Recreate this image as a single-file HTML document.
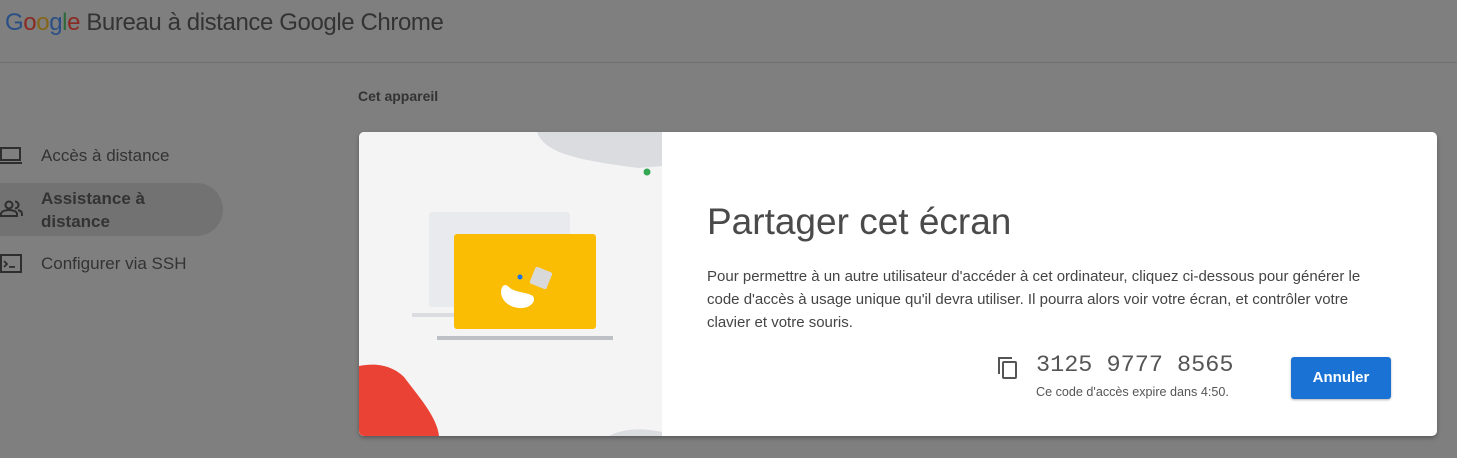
<!DOCTYPE html>
<html><head><meta charset="utf-8"><style>
*{margin:0;padding:0;box-sizing:border-box}
body{width:1457px;height:458px;background:#7f7f7f;font-family:"Liberation Sans",Arial,sans-serif;position:relative;overflow:hidden;color:#2e2e2e}
.abs{position:absolute}
</style></head><body>
<div class="abs" style="left:5px;top:9px;font-size:24px;letter-spacing:-0.4px;white-space:nowrap">
<span style="color:#2a4f86">G</span><span style="color:#8a2b22">o</span><span style="color:#84661a">o</span><span style="color:#2a4f86">g</span><span style="color:#2d6a3a">l</span><span style="color:#8a2b22">e</span> <span style="color:#333">Bureau à distance Google Chrome</span></div>
<div class="abs" style="left:0;top:62px;width:1457px;height:1px;background:#6f6f6f"></div>
<div class="abs" style="left:358px;top:88px;font-size:14px;font-weight:bold;color:#333">Cet appareil</div>
<div class="abs" style="left:0;top:183px;width:223px;height:53px;background:#727272;border-radius:0 27px 27px 0"></div>
<svg class="abs" style="left:0;top:146px" width="24" height="20" viewBox="0 0 24 20"><rect x="1" y="2" width="19" height="12" fill="none" stroke="#2e2e2e" stroke-width="2"/><rect x="0" y="16" width="22" height="2" fill="#2e2e2e"/></svg>
<div class="abs" style="left:41px;top:146px;font-size:17px;color:#333">Accès à distance</div>
<svg class="abs" style="left:0;top:199px" width="24" height="20" viewBox="0 0 24 20"><circle cx="9" cy="6" r="3.5" fill="none" stroke="#2e2e2e" stroke-width="2"/><path d="M1 17v-2c0-3 5-4 8-4s8 1 8 4v2z" fill="none" stroke="#2e2e2e" stroke-width="2"/><path d="M15 2.5a3.5 3.5 0 0 1 0 7M18 11c2 .5 4 1.5 4 4v2" fill="none" stroke="#2e2e2e" stroke-width="2"/></svg>
<div class="abs" style="left:41px;top:187px;font-size:17px;font-weight:bold;color:#333;line-height:23px">Assistance à<br>distance</div>
<svg class="abs" style="left:0;top:254px" width="24" height="20" viewBox="0 0 24 20"><rect x="1" y="1" width="20" height="17" fill="none" stroke="#2e2e2e" stroke-width="2"/><path d="M4 7l3 3-3 3" fill="none" stroke="#2e2e2e" stroke-width="1.8"/><rect x="9" y="12" width="6" height="1.8" fill="#2e2e2e"/></svg>
<div class="abs" style="left:41px;top:254px;font-size:17px;color:#333">Configurer via SSH</div>

<div class="abs" style="left:359px;top:132px;width:1078px;height:304px;background:#fff;border-radius:5px;overflow:hidden;box-shadow:0 2px 4px rgba(0,0,0,.3)">
<div class="abs" style="left:0;top:0;width:303px;height:304px;background:#f4f4f4;overflow:hidden">
<svg width="303" height="304" viewBox="0 0 303 304">
<path d="M178 0 C185 20 215 28 280 36 L303 34 L303 0Z" fill="#dadce0"/>
<path d="M250 304 C265 296 285 296 303 300 L303 304Z" fill="#dadce0"/>
<circle cx="288" cy="40" r="3.5" fill="#34a853"/>
<rect x="70" y="80" width="141" height="95" rx="3" fill="#e8eaed"/>
<rect x="53" y="181" width="60" height="4" fill="#dadce0"/>
<rect x="95" y="102" width="142" height="95" rx="3" fill="#fbbc04"/>
<rect x="78" y="204" width="176" height="4" fill="#bdc1c6"/>
<rect x="173" y="137" width="18" height="18" rx="2" fill="#d9d9d9" transform="rotate(22 182 146)"/>
<circle cx="161" cy="145" r="2.5" fill="#1a73e8"/>
<path d="M144 154 C138 162 146 175 160 176 C170 177 178 170 174 164 C168 160 158 161 151 156 C148 153 146 152 144 154Z" fill="#fff"/>
<path d="M0 234 C20 230 35 235 45 245 C60 265 78 285 80 304 L0 304Z" fill="#ea4335"/>
</svg></div>
<div class="abs" style="left:348px;top:69px;font-size:37px;color:#4a4a4a">Partager cet écran</div>
<div class="abs" style="left:348px;top:133px;width:685px;font-size:15px;line-height:23px;color:#444">Pour permettre à un autre utilisateur d'accéder à cet ordinateur, cliquez ci-dessous pour générer le code d'accès à usage unique qu'il devra utiliser. Il pourra alors voir votre écran, et contrôler votre clavier et votre souris.</div>
<svg class="abs" style="left:637px;top:223px" width="26" height="26" viewBox="0 0 26 26"><path d="M3 19V3h13" fill="none" stroke="#555" stroke-width="2"/><rect x="7" y="7" width="13" height="16" rx="1" fill="none" stroke="#555" stroke-width="2"/></svg>
<div class="abs" style="left:677px;top:220px;font-family:'Liberation Mono',monospace;font-size:23.5px;color:#555;white-space:nowrap">3125 9777 8565</div>
<div class="abs" style="left:677px;top:253px;font-size:12.6px;color:#555">Ce code d'accès expire dans 4:50.</div>
<div class="abs" style="left:932px;top:225px;width:100px;height:42px;background:#1a73d4;border-radius:3px;color:#fff;font-size:15px;font-weight:bold;text-align:center;line-height:42px;box-shadow:0 1px 2px rgba(0,0,0,.3)">Annuler</div>
</div>
</body></html>
